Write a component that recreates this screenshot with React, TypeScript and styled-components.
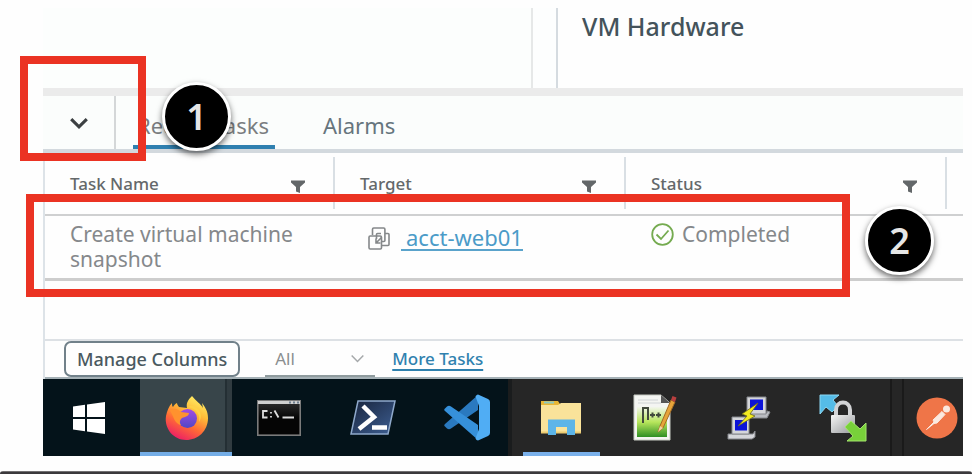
import React from "react";
import styled, { createGlobalStyle, css } from "styled-components";

const GlobalStyle = createGlobalStyle`
  *, *::before, *::after { box-sizing: border-box; }
  body {
    margin: 0;
    background: #fefefe;
    color: #5f6366;
    font-family: "Noto Sans", "Open Sans", sans-serif;
  }
  button, select { font-family: inherit; }
`;

const Page = styled.div`
  overflow: hidden;
`;

const Screen = styled.main`
  margin: 8px 9px 15px 43px;
`;

const Workspace = styled.section`
  display: flex;
  height: 88px;
  border-bottom: 8px solid #ebebeb;
`;

const Navigator = styled.div`
  flex: 0 0 490px;
  background: #fcfefd;
  border-right: 2px solid #e6e8e8;
`;

const Splitter = styled.div`
  flex: 0 0 25px;
  border-right: 2px solid #d5dbe0;
  background: #fdfefe;
`;

const Details = styled.div`
  flex: 1;
  padding: 2px 24px;
`;

const DetailsTitle = styled.h2`
  margin: 0;
  font-size: 25px;
  line-height: 32px;
  font-weight: 500;
  color: #44535b;
`;

const TabBar = styled.div`
  position: relative;
  display: flex;
  height: 57px;
  background: #fbfdfc;
  border-bottom: 4px solid #d3d9de;
`;

const CollapseButton = styled.button`
  display: flex;
  align-items: center;
  justify-content: center;
  width: 73px;
  padding: 0;
  border: 0;
  border-right: 2px solid #d4d7d8;
  background: transparent;
`;

const Tab = styled.button<{ $active?: boolean }>`
  padding: 4px 6px 0 4px;
  margin-left: 17px;
  border: 0;
  background: ${(p) =>
    p.$active
      ? "linear-gradient(#2f80b0, #2f80b0) bottom / 100% 4px no-repeat"
      : "transparent"};
  color: ${(p) => (p.$active ? "#7a7d80" : "#66757d")};
  font-size: 22px;
  white-space: nowrap;
  & + & { margin-left: 44px; }
`;

const Grid = styled.div`
  position: relative;
  border-left: 2px solid #dde3e8;
`;

const TaskTable = styled.table`
  width: 100%;
  table-layout: fixed;
  border-collapse: separate;
  border-spacing: 0;
`;

const Column = styled.col<{ $width?: number }>`
  width: ${(p) => (p.$width ? `${p.$width}px` : "auto")};
`;

const HeadCell = styled.th`
  height: 63px;
  padding: 4px 0 5px;
  border-bottom: 2px solid #cfd0d1;
  font-weight: 500;
  text-align: left;
`;

const HeadInner = styled.div`
  display: flex;
  align-items: center;
  justify-content: space-between;
  height: 52px;
  padding: 2px 28px 0 25px;
  border-right: 2px solid #d9dfe4;
  font-size: 17px;
  line-height: 24px;
  color: #64686a;
`;

const FilterButton = styled.button`
  display: flex;
  padding: 0;
  border: 0;
  margin-top: 4px;
  background: transparent;
`;

const Cell = styled.td`
  height: 65px;
  padding: 6px 24px 4px 25px;
  border-bottom: 3px solid #cdcdcd;
  vertical-align: top;
  font-size: 21px;
  line-height: 25px;
  color: #85888b;
`;

const CellLine = styled.div<{ $indent?: boolean }>`
  display: flex;
  align-items: center;
  gap: 8px;
  ${(p) =>
    p.$indent &&
    css`
      gap: 11px;
      padding: 4px 0 0 8px;
    `}
`;

const TargetLink = styled.a`
  padding-left: 5px;
  border-bottom: 2px solid #5aa3cb;
  color: #4b9bc8;
  font-size: 22px;
  line-height: 23px;
  text-decoration: none;
`;

const EmptyArea = styled.div`
  height: 58px;
`;

const Footer = styled.footer`
  display: flex;
  height: 40px;
  padding-left: 19px;
  border-top: 2px solid #dde1e5;
  border-bottom: 2px solid #a5b1b6;
`;

const ManageButton = styled.button`
  height: 36px;
  padding: 0 11px;
  border: 2px solid #71818a;
  border-radius: 7px;
  background: #fefefe;
  color: #4a5960;
  font-size: 18px;
  font-weight: 500;
  line-height: 24px;
  white-space: nowrap;
`;

const SelectBox = styled.label`
  display: flex;
  align-items: center;
  width: 110px;
  height: 36px;
  margin: 0 17px 0 25px;
  padding-right: 10px;
  border-bottom: 2px solid #8f9b9e;
`;

const FilterSelect = styled.select`
  flex: 1;
  appearance: none;
  padding: 0 0 0 10px;
  border: 0;
  background: transparent;
  color: #8b8e90;
  font-size: 17px;
`;

const MoreLink = styled.a`
  align-self: center;
  color: #2f81ae;
  font-size: 17px;
  font-weight: 500;
  line-height: 24px;
  text-underline-offset: 4px;
  text-decoration-thickness: 2px;
`;

const Taskbar = styled.nav`
  display: flex;
  height: 77px;
  overflow: hidden;
  background: linear-gradient(90deg, #04131a 465px, #1a1c1d 465px, #1a1c1d 469px, #262626 469px);
`;

const TaskButton = styled.button<{ $width?: number; $state?: "active" | "running" | "group" }>`
  display: flex;
  flex: 0 0 ${(p) => p.$width ?? 94}px;
  align-items: center;
  justify-content: center;
  padding: 0;
  border: 0;
  background: transparent;
  &:first-child { margin-right: 6px; }
  ${(p) =>
    p.$state === "active" &&
    css`
      background: linear-gradient(#74ade6, #74ade6) bottom / 100% 4px no-repeat,
        linear-gradient(90deg, #38454a 85px, #242f34 85px, #242f34 87px, #303b40 87px);
    `}
  ${(p) =>
    p.$state === "running" &&
    css`
      background: linear-gradient(#7ab0ea, #7ab0ea) bottom / 77px 4px no-repeat;
    `}
  ${(p) =>
    p.$state === "group" &&
    css`
      background: linear-gradient(90deg, #1a1a1a 2px, #262626 2px, #262626 12px, #1a1a1a 12px, #1a1a1a 14px, #262626 14px);
    `}
`;

const Desk = styled.div`
  height: 3px;
  background: linear-gradient(#8d8b8d, #3b393c 50%);
  border-radius: 4px 4px 0 0;
`;

const Highlight = styled.div<{ $x: number; $y: number; $w: number; $h: number }>`
  position: absolute;
  left: ${(p) => p.$x}px;
  top: ${(p) => p.$y}px;
  width: ${(p) => p.$w}px;
  height: ${(p) => p.$h}px;
  border: 8px solid #eb3323;
  pointer-events: none;
  z-index: 1;
`;

const StepBadge = styled.div<{ $x: number; $y: number }>`
  position: absolute;
  left: ${(p) => p.$x}px;
  top: ${(p) => p.$y}px;
  display: flex;
  align-items: center;
  justify-content: center;
  width: 69px;
  height: 69px;
  border: 3px solid #fff;
  border-radius: 50%;
  background: #000;
  box-shadow: 0 3px 6px rgba(0, 0, 0, 0.6);
  color: #e6e6e6;
  font-size: 36px;
  font-weight: 600;
  line-height: 48px;
  z-index: 2;
`;

const Chevron = ({ size, color, weight }: { size: number; color: string; weight: number }) => (
  <svg width={size} height={size} viewBox="0 0 18 18" aria-hidden="true">
    <path d="M2 5.500 9 12.500 16 5.500" fill="none" stroke={color} strokeWidth={weight} />
  </svg>
);

const Funnel = () => (
  <svg width="14" height="13" viewBox="0 0 14 13" aria-hidden="true">
    <path d="M0 0.500h14v2L9 7v6L5 11.500V7L0 2.500z" fill="#636769" />
  </svg>
);

const VmIcon = () => (
  <svg width="22" height="23" viewBox="0 0 22 23" fill="none" stroke="#85888a" strokeWidth="1.600" aria-hidden="true">
    <path d="M4.500 8V2.200q0-1.200 1.200-1.200h10q1.200 0 1.200 1.200V13.500q0 1-1 1H13" />
    <path d="M17 6.500h3q1 0 1 1V17.500q0 1-1 1h-6" />
    <path d="M8.500 12V7.500q0-1 1-1H13" />
    <rect x="1" y="9" width="12.500" height="13" rx="1.200" />
    <path d="M8 11.500V16h4.500M8 16l5.500-5.500" />
  </svg>
);

const CheckIcon = () => (
  <svg width="23" height="23" viewBox="0 0 23 23" fill="none" stroke="#75ab50" strokeWidth="1.800" aria-hidden="true">
    <circle cx="11.500" cy="11.500" r="10.300" />
    <path d="M5.500 11.500 10 16l7.500-8.500" />
  </svg>
);

const WindowsIcon = () => (
  <svg width="32" height="32" viewBox="0 0 32 32" fill="#fff" aria-hidden="true">
    <path d="M0 4.500 12 2.800V15H0zM14 2.500 32 0v15H14zM0 17h12v12.200L0 27.500zM14 17h18v15l-18-2.500z" />
  </svg>
);

const FirefoxIcon = () => (
  <svg width="46" height="46" viewBox="0 0 46 46" aria-hidden="true">
    <defs>
      <linearGradient id="ffBody" x1="0.800" y1="0" x2="0.300" y2="1">
        <stop offset="0" stopColor="#fff36b" />
        <stop offset="0.350" stopColor="#ffbd38" />
        <stop offset="0.650" stopColor="#ff6b35" />
        <stop offset="1" stopColor="#ec1c67" />
      </linearGradient>
      <linearGradient id="ffGlobe" x1="0.500" y1="0" x2="0.500" y2="1">
        <stop offset="0" stopColor="#a44be4" />
        <stop offset="1" stopColor="#5147c5" />
      </linearGradient>
    </defs>
    <path d="M29 1c-4 4-6 7-5 12l-8-1c-1-1-2-3-2-4-2 1-3 2-4 4-1-1-1-2-1-4-3 3-5 8-6 13-2 13 8 24 20 24s22-9 22-22c0-7-3-11-6-15l1 5c-2-4-7-7-11-12z" fill="url(#ffBody)" />
    <circle cx="24.500" cy="23.500" r="9.500" fill="url(#ffGlobe)" />
    <path d="M7 15c4-3 9 0 11 2l8 1c0 3-4 4-7 5-2 2-3 4-1 7-6-1-7-7-11-15z" fill="#ff922e" />
    <path d="M25 12c8 1 13 8 11 15 3-4 2-10-1-13-4-4-7-4-10-2z" fill="#ffd147" />
  </svg>
);

const TerminalIcon = () => (
  <svg width="44" height="36" viewBox="0 0 44 36" aria-hidden="true">
    <defs>
      <linearGradient id="cmdFace" x1="0" y1="0" x2="0" y2="1">
        <stop offset="0" stopColor="#303030" />
        <stop offset="0.500" stopColor="#050505" />
      </linearGradient>
    </defs>
    <rect x="0.800" y="0.800" width="42.400" height="34.400" fill="url(#cmdFace)" stroke="#7b7b7b" strokeWidth="1.600" />
    <path d="M1 2.500h42" stroke="#cfcfcf" strokeWidth="3" />
    <path d="M32 2.500h2M36 2.500h2M40 2.500h2" stroke="#6e7f8e" strokeWidth="2" />
    <path d="M10.500 11H6v6.500h4.500M14 12v1.500M14 16v1.500M17.500 10.500l4 7M25.500 17.500H37" fill="none" stroke="#ddd" strokeWidth="1.800" />
  </svg>
);

const PowerShellIcon = () => (
  <svg width="46" height="35" viewBox="0 0 46 35" aria-hidden="true">
    <defs>
      <linearGradient id="psFace" x1="0" y1="0" x2="1" y2="1">
        <stop offset="0" stopColor="#18243c" />
        <stop offset="1" stopColor="#3e5f93" />
      </linearGradient>
    </defs>
    <path d="M8 1h37l-7 33H1z" fill="url(#psFace)" stroke="#8fa9cb" strokeWidth="1.500" />
    <path d="m13 6 11 11L9 29M22 27.500h15" fill="none" stroke="#fff" strokeWidth="4.500" />
  </svg>
);

const CodeIcon = () => (
  <svg width="46" height="47" viewBox="0 0 46 47" aria-hidden="true">
    <path d="M1 30 34 1v15L7 34.500q-2 1.500-4 0l-2-2q-1.500-1-0-2.500z" fill="#2a79bf" />
    <path d="M1 17 34 46V31L7 12.500q-2-1.500-4 0l-2 2q-1.500 1-0 2.500z" fill="#3690da" />
    <path d="M34 0.500 44 5q2 1 2 3v31q0 2-2 3l-10 4.500c-1 0-2-1-2.500-2L35 35V12l-3.500-9.500c.5-1 1.500-2 2.500-2z" fill="#50adf4" />
  </svg>
);

const FolderIcon = () => (
  <svg width="42" height="36" viewBox="0 0 42 36" aria-hidden="true">
    <path d="M1 1h17l2 3v8H1z" fill="#e9b736" />
    <path d="M4 2.500h10" stroke="#8ecbc0" strokeWidth="2" />
    <path d="M1 5h17l3-2h20v30H1z" fill="#fae39a" />
    <path d="M1 31.500h40v2H1z" fill="#ebcb72" />
    <path d="M8 35V19.500h27V35h-8v-8H16v8z" fill="#5db5e8" />
  </svg>
);

const NotepadIcon = () => (
  <svg width="44" height="48" viewBox="0 0 44 48" aria-hidden="true">
    <defs>
      <linearGradient id="npGreen" x1="0" y1="0" x2="0" y2="1">
        <stop offset="0" stopColor="#f2f6ec" />
        <stop offset="0.500" stopColor="#b8e65c" />
        <stop offset="1" stopColor="#2f8f24" />
      </linearGradient>
    </defs>
    <path d="M1 1h27l9 8v37H1z" fill="#f4f5f2" stroke="#c6cac2" />
    <path d="M4 13h30v30H4z" fill="url(#npGreen)" />
    <path d="M5 6h20M5 9h23" stroke="#d0d4d6" />
    <path d="M28 1v8h9" fill="#555" />
    <path d="M10 29V14h5v12M17 21h5M19.500 18.500v5M23 21h5M25.500 18.500v5" fill="none" stroke="#424a3d" strokeWidth="2" />
    <path d="M25 38 27 32 38 6l4 2-12 26z" fill="#e7a43a" stroke="#a36c24" />
    <path d="m38 6 1.500-4 4 1.500L42 8z" fill="#b83f3f" />
    <path d="m25 38 2-6 3 2z" fill="#efd5a0" />
  </svg>
);

const PuttyIcon = () => (
  <svg width="44" height="44" viewBox="0 0 44 44" aria-hidden="true">
    <g stroke="#85878c">
      <path d="M20 17h20v-2l3 1-3 6H20z" fill="#b9bbc0" />
      <path d="M20 1h19v17H20z" fill="#d5d6da" />
      <path d="M1 38h25l2-3v6l-3 2H1z" fill="#d5d6da" />
      <path d="M5 21h17v17H5z" fill="#d5d6da" />
    </g>
    <path d="M23 3.500h13V14H23zM8 24h12v10.500H8z" fill="#0b12d8" />
    <path d="M31 7 15 18l5 2-9 10 17-10-5-2z" fill="#f3ea21" stroke="#6e6b1c" strokeWidth="0.800" />
  </svg>
);

const WinScpIcon = () => (
  <svg width="48" height="48" viewBox="0 0 48 48" aria-hidden="true">
    <defs>
      <linearGradient id="lockFace" x1="0" y1="0" x2="1" y2="1">
        <stop offset="0" stopColor="#f5f5f5" />
        <stop offset="1" stopColor="#96989b" />
      </linearGradient>
    </defs>
    <path d="M1 1h19l-6 5 5 6-6 6-6-5-6 7z" fill="#55bce8" stroke="#8cd7f2" />
    <path d="M17 22v-6c0-10 14-10 14 0v6" fill="none" stroke="#d2d3d5" strokeWidth="4" />
    <rect x="12" y="21" width="24" height="18" rx="1" fill="url(#lockFace)" />
    <path d="M47 47H28l6-5-8-9 6-6 9 8 6-6z" fill="#78d13a" stroke="#a3e36c" />
  </svg>
);

const PostmanIcon = () => (
  <svg width="42" height="42" viewBox="0 0 42 42" aria-hidden="true">
    <circle cx="21" cy="21" r="20.500" fill="#ef7548" />
    <circle cx="30.500" cy="12" r="3.500" fill="#fbe9df" />
    <path d="M10.500 32.500 18 25l-1-2 9-8.500 3 3L21 26l-3 .5z" fill="#fbe9df" stroke="#fbe9df" strokeLinejoin="round" />
  </svg>
);

const columns = ["Task Name", "Target", "Status"];

const taskbarItems = [
  { name: "Start", icon: <WindowsIcon />, width: 91 },
  { name: "Firefox", icon: <FirefoxIcon />, width: 92, state: "active" as const },
  { name: "Command Prompt", icon: <TerminalIcon /> },
  { name: "PowerShell", icon: <PowerShellIcon /> },
  { name: "Visual Studio Code", icon: <CodeIcon /> },
  { name: "File Explorer", icon: <FolderIcon />, state: "running" as const },
  { name: "Notepad++", icon: <NotepadIcon /> },
  { name: "PuTTY", icon: <PuttyIcon /> },
  { name: "WinSCP", icon: <WinScpIcon /> },
  { name: "Postman", icon: <PostmanIcon />, state: "group" as const },
];

export default function App() {
  return (
    <Page>
      <GlobalStyle />
      <Screen>
        <Workspace>
          <Navigator />
          <Splitter />
          <Details>
            <DetailsTitle>VM Hardware</DetailsTitle>
          </Details>
        </Workspace>
        <TabBar>
          <CollapseButton aria-label="Collapse panel">
            <Chevron size={20} color="#3c4042" weight={2.8} />
          </CollapseButton>
          <Tab $active>Recent Tasks</Tab>
          <Tab>Alarms</Tab>
          <Highlight $x={-23} $y={-40} $w={126} $h={105} />
          <StepBadge $x={119} $y={-14}>1</StepBadge>
        </TabBar>
        <Grid>
          <TaskTable>
            <colgroup>
              <Column $width={290} />
              <Column $width={291} />
              <Column $width={321} />
              <Column />
            </colgroup>
            <thead>
              <tr>
                {columns.map((name) => (
                  <HeadCell key={name} scope="col">
                    <HeadInner>
                      {name}
                      <FilterButton aria-label={`Filter ${name}`}>
                        <Funnel />
                      </FilterButton>
                    </HeadInner>
                  </HeadCell>
                ))}
                <HeadCell as="td" />
              </tr>
            </thead>
            <tbody>
              <tr>
                <Cell>Create virtual machine snapshot</Cell>
                <Cell>
                  <CellLine $indent>
                    <VmIcon />
                    <TargetLink href="#acct-web01">acct-web01</TargetLink>
                  </CellLine>
                </Cell>
                <Cell>
                  <CellLine>
                    <CheckIcon />
                    Completed
                  </CellLine>
                </Cell>
                <Cell />
              </tr>
            </tbody>
          </TaskTable>
          <EmptyArea />
          <Highlight $x={-19} $y={41} $w={824} $h={103} />
          <StepBadge $x={820} $y={53}>2</StepBadge>
          <Footer>
            <ManageButton>Manage Columns</ManageButton>
            <SelectBox>
              <FilterSelect aria-label="Task filter" defaultValue="All">
                <option>All</option>
              </FilterSelect>
              <Chevron size={15} color="#a5a8aa" weight={1.8} />
            </SelectBox>
            <MoreLink href="#more-tasks">More Tasks</MoreLink>
          </Footer>
        </Grid>
        <Taskbar aria-label="Taskbar">
          {taskbarItems.map((item) => (
            <TaskButton key={item.name} aria-label={item.name} $width={item.width} $state={item.state}>
              {item.icon}
            </TaskButton>
          ))}
        </Taskbar>
      </Screen>
      <Desk />
    </Page>
  );
}
